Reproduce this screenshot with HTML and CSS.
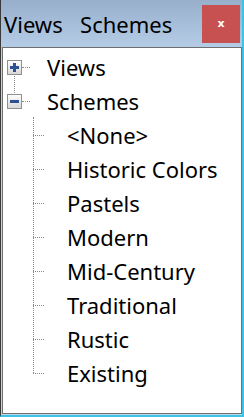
FILE: index.html
```html
<!DOCTYPE html>
<html lang="en">
<head>
    <meta charset="UTF-8">
    <meta name="viewport" content="width=device-width, initial-scale=1.0">
    <title>Views  Schemes</title>
    <link rel="stylesheet" href="styles.css">
</head>
<body>
    <div class="window">
        <div class="titlebar">
            <span class="title">Views  Schemes</span>
            <div class="close">x</div>
        </div>
        <div class="client">
            <ul class="tree">
                <li class="node">
                    <div class="row"><span class="toggle plus"></span><span class="label">Views</span></div>
                </li>
                <li class="node">
                    <div class="row"><span class="toggle minus"></span><span class="label">Schemes</span></div>
                    <ul class="children">
                        <li class="leaf">&lt;None&gt;</li>
                        <li class="leaf">Historic Colors</li>
                        <li class="leaf">Pastels</li>
                        <li class="leaf">Modern</li>
                        <li class="leaf">Mid-Century</li>
                        <li class="leaf">Traditional</li>
                        <li class="leaf">Rustic</li>
                        <li class="leaf">Existing</li>
                    </ul>
                </li>
            </ul>
        </div>
    </div>
</body>
</html>
```

FILE: styles.css
```css
* {
    box-sizing: border-box;
}
body {
    margin: 0;
    font-family: "Noto Sans", "Open Sans", sans-serif;
    color: #000;
}
.window {
    width: 244px;
    height: 417px;
    display: flex;
    flex-direction: column;
    background: linear-gradient(#97afcb, #bcd4ed 60px);
    border-left: 1px solid #3a3a3a;
    border-right: 2px solid #3cc3e6;
    border-bottom: 2px solid #3cc3e6;
    padding: 0 0 1px 1px;
}
.titlebar {
    height: 47px;
    display: flex;
    align-items: flex-start;
    justify-content: space-between;
    flex-shrink: 0;
}
.title {
    white-space: pre;
    font-size: 22px;
    line-height: 26px;
    word-spacing: 3px;
    margin-top: 11px;
    margin-left: 2px;
}
.close {
    width: 38px;
    height: 38px;
    margin-top: 5px;
    margin-right: 2px;
    background: #c75050;
    color: #fff;
    font-family: "DejaVu Sans", sans-serif;
    font-weight: bold;
    font-size: 11px;
    display: flex;
    align-items: center;
    justify-content: center;
    padding-bottom: 2px;
}
.client {
    flex: 1;
    background: #fff;
    border: 1px solid #6f6f6f;
    padding-top: 2px;
}
.tree,
.children {
    list-style: none;
    margin: 0;
    padding: 0;
}
.tree {
    position: relative;
}
.tree::before {
    content: "";
    position: absolute;
    left: 11px;
    top: 17px;
    height: 34px;
    border-left: 1px dotted #8a8a8a;
}
.row,
.leaf {
    height: 34px;
    display: flex;
    align-items: center;
    font-size: 22px;
    white-space: nowrap;
}
.row {
    position: relative;
}
.row::after {
    content: "";
    position: absolute;
    left: 19px;
    top: 17px;
    width: 8px;
    border-top: 1px dotted #8a8a8a;
}
.toggle {
    position: relative;
    z-index: 1;
    width: 15px;
    height: 15px;
    margin-left: 4px;
    margin-right: 25px;
    border: 1px solid #909090;
    background: linear-gradient(#fdfdfd, #d8d8d8);
}
.toggle::before,
.toggle::after {
    content: "";
    position: absolute;
    background: #2f4f94;
}
.toggle::before {
    left: 2px;
    top: 5px;
    width: 9px;
    height: 3px;
}
.plus::after {
    left: 5px;
    top: 2px;
    width: 3px;
    height: 9px;
}
.children {
    position: relative;
}
.children::before {
    content: "";
    position: absolute;
    left: 30px;
    top: -1px;
    bottom: 17px;
    border-left: 1px dotted #8a8a8a;
}
.leaf {
    position: relative;
    padding-left: 64px;
}
.leaf::before {
    content: "";
    position: absolute;
    left: 30px;
    top: 17px;
    width: 11px;
    border-top: 1px dotted #8a8a8a;
}
```
